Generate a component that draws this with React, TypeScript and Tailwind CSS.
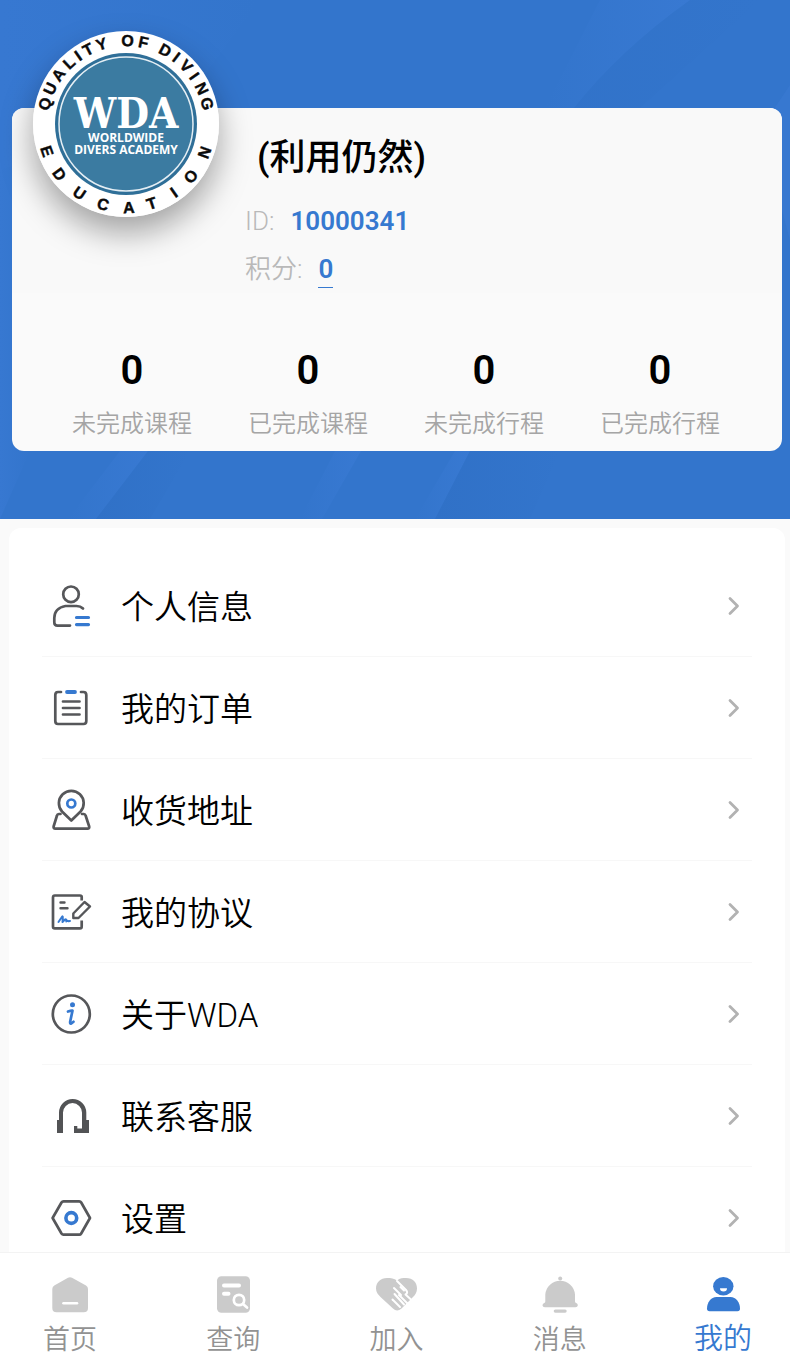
import type { ReactNode } from "react";

const GRAY = "#56575a";
const BLUE = "#3679d0";

/* --- banner --- */
function BannerBackground() {
  return (
    <svg
      className="absolute inset-0 w-full h-full"
      viewBox="0 0 790 519"
      preserveAspectRatio="none"
      aria-hidden="true"
    >
      <defs>
        <linearGradient id="streak" x1="0" y1="0" x2="1" y2="0">
          <stop offset="0" stopColor="#3879d2" stopOpacity="0" />
          <stop offset="1" stopColor="#3879d2" />
        </linearGradient>
        <linearGradient id="shade" x1="0" y1="0" x2="1" y2="0">
          <stop offset="0" stopColor="#3071c7" />
          <stop offset="1" stopColor="#3071c7" stopOpacity="0" />
        </linearGradient>
        <linearGradient id="corner" x1="0" y1="0" x2="1" y2="0">
          <stop offset="0" stopColor="#3778d1" />
          <stop offset="1" stopColor="#3778d1" stopOpacity="0" />
        </linearGradient>
      </defs>
      <rect width="790" height="519" fill="#3375cc" />
      <path d="M0 0H260L180 108L0 170Z" fill="url(#corner)" />
      <path d="M600 0H690Q620 50 574 108H545Z" fill="url(#streak)" />
      <path d="M690 0H760L640 108H574Q620 50 690 0Z" fill="url(#shade)" opacity="0.5" />
      <path d="M0 110H30V451L0 519Z" fill="url(#corner)" />
      <path d="M120 451H148L96 519H68Z" fill="url(#streak)" />
      <path d="M148 451H190L150 519H96Z" fill="url(#shade)" />
      <path d="M335 451H361L322 519H300Z" fill="url(#streak)" />
      <path d="M455 451H470L435 519H415Z" fill="url(#streak)" />
      <path d="M470 451H560L530 519H435Z" fill="url(#shade)" />
      <path d="M790 85V240L760 130Z" fill="#3778d0" />
    </svg>
  );
}

// [letter, angle in degrees from the top, clockwise]
const TOP_RING: [string, number][] = [
  ["Q", -76], ["U", -65], ["A", -54], ["L", -43], ["I", -35], ["T", -27], ["Y", -17],
  ["O", 1], ["F", 12],
  ["D", 28], ["I", 37], ["V", 46], ["I", 55], ["N", 65], ["G", 76],
];

// [letter, angle in degrees from the bottom, clockwise]
const BOTTOM_RING: [string, number][] = [
  ["E", 71], ["D", 53], ["U", 34], ["C", 16], ["A", -2], ["T", -18], ["I", -35], ["O", -51], ["N", -70],
];

function Logo() {
  return (
    <svg className="block w-full h-full" viewBox="0 0 186 186" role="img" aria-label="WDA">
      <circle cx="93" cy="93" r="93" fill="#fff" />
      <circle cx="93" cy="93" r="71" fill="#2f6f98" />
      <circle cx="93" cy="93" r="67" fill="#3b7ba1" stroke="#e4eef4" strokeWidth="1.5" />
      <g
        fontFamily="'Liberation Sans', sans-serif"
        fontWeight="700"
        fontSize="16"
        textAnchor="middle"
        fill="#0a0a0a"
        stroke="#0a0a0a"
        strokeWidth="0.4"
      >
        {TOP_RING.map(([c, a], i) => (
          <text key={i} x="93" y="15" transform={`rotate(${a} 93 93)`}>{c}</text>
        ))}
        {BOTTOM_RING.map(([c, a], i) => (
          <text key={i} x="93" y="182" transform={`rotate(${a} 93 93)`}>{c}</text>
        ))}
      </g>
      <text fill="#fff" textAnchor="middle" fontWeight="700" fontFamily="'Open Sans', sans-serif" fontSize="12">
        <tspan
          x="93"
          y="97"
          fontFamily="'DejaVu Serif Condensed', 'DejaVu Serif', serif"
          fontSize="42"
        >
          WDA
        </tspan>
        <tspan x="93" y="111">WORLDWIDE</tspan>
        <tspan x="93" y="123">DIVERS ACADEMY</tspan>
      </text>
    </svg>
  );
}

/* --- menu icons --- */
function MenuIcon({ children }: { children: ReactNode }) {
  return (
    <svg
      className="w-11 h-11 shrink-0"
      viewBox="0 0 44 44"
      fill="none"
      stroke={GRAY}
      strokeWidth="2.7"
      strokeLinecap="round"
      strokeLinejoin="round"
      aria-hidden="true"
    >
      {children}
    </svg>
  );
}

const MENU: { label: string; icon: ReactNode }[] = [
  {
    label: "个人信息",
    icon: (
      <>
        <circle cx="22" cy="10.3" r="7.8" />
        <path d="M34 24.5Q31.500 22 27.500 22H16.500Q5.500 24 5.300 34V38.500Q5.300 41.600 8.500 41.600H21" />
        <path d="M27.500 33.500H39.500M27.500 40.600H39.500" stroke={BLUE} strokeWidth="3.200" />
      </>
    ),
  },
  {
    label: "我的订单",
    icon: (
      <>
        <path d="M12 6H9Q6.300 6 6.300 9V35Q6.300 38 9 38H34.500Q37.300 38 37.300 35V9Q37.300 6 34.500 6H32" />
        <path d="M14 15.500H30.500M14 22H30.500M14 28.500H30.500" />
        <path d="M18 6H26" stroke={BLUE} strokeWidth="3.800" />
      </>
    ),
  },
  {
    label: "收货地址",
    icon: (
      <>
        <path d="M22.300 32.500L13 23.500A12.400 12.400 0 1 1 31.600 23.500Z" />
        <path d="M11.500 26H9.800Q8.300 26 8 27.500L4.600 38.500Q4.300 40.600 6.300 40.600H38.500Q40.600 40.600 40.200 38.500L36.600 27.500Q36.200 26 34.800 26H33" />
        <circle cx="22.300" cy="15.500" r="4" stroke={BLUE} />
      </>
    ),
  },
  {
    label: "我的协议",
    icon: (
      <>
        <path d="M32.700 10.500V7Q32.700 5.500 31 5.500H5.800Q4 5.500 4 7.500V36.500Q4 38.400 5.800 38.400H31Q32.700 38.400 32.700 36.500V30.500" strokeLinecap="butt" />
        <path d="M11.500 12.500H15.500M11.500 18.300H18.500" strokeWidth="2.400" />
        <path d="M24.300 23.500L35.500 12L41 16.500L29.500 28H24.300Z" strokeWidth="2.400" />
        <path d="M9.500 32L12.500 27.500Q14 25 13.800 28L13.500 32L16 29.500Q17.500 28.500 17.300 31.500Q18.500 30 19.300 31.300L21 31" stroke={BLUE} strokeWidth="2" />
      </>
    ),
  },
  {
    label: "关于WDA",
    icon: (
      <>
        <circle cx="22.300" cy="22" r="18.500" />
        <circle cx="23.500" cy="12.800" r="2.500" fill={BLUE} stroke="none" />
        <path d="M19 19.500Q22 18.500 23.500 18.700L21.200 29.500Q20.800 32 22.300 31.500L24.500 29.800" stroke={BLUE} />
      </>
    ),
  },
  {
    label: "联系客服",
    icon: (
      <path
        d="M8 39V26H10V18.600A13.650 13.650 0 0 1 37.300 18.600V26H40V39H25V32H28.300V34.500H33V18.600A9.500 9.500 0 0 0 14 18.600V39Z"
        fill="#525355"
        stroke="none"
      />
    ),
  },
  {
    label: "设置",
    icon: (
      <>
        <path d="M3.600 22L12.500 6.500Q13.300 5.300 14.500 5.300H30.200Q31.500 5.300 32.200 6.500L41 22L32.200 37.500Q31.500 38.700 30.200 38.700H14.500Q13.300 38.700 12.500 37.500Z" />
        <circle cx="22.300" cy="22" r="5.400" stroke={BLUE} strokeWidth="3.600" />
      </>
    ),
  },
];

function Chevron() {
  return (
    <svg className="w-3 h-5 ml-auto" viewBox="0 0 12 20" fill="none" aria-hidden="true">
      <path d="M2 2.500L9.500 10L2 17.500" stroke="#b2b2b2" strokeWidth="2.800" strokeLinecap="round" strokeLinejoin="round" />
    </svg>
  );
}

/* --- tab bar --- */
const TABS: { label: string; active?: boolean; icon: ReactNode }[] = [
  {
    label: "首页",
    icon: (
      <>
        <path d="M18 3.800Q20 2.700 22 3.800L36 11.500Q38 12.800 38 15V34Q38 38.300 33.700 38.300H6.600Q2.300 38.300 2.300 34V15Q2.300 12.800 4.300 11.500Z" />
        <path d="M13.500 29.300H27" stroke="#fff" strokeWidth="2.600" strokeLinecap="round" />
      </>
    ),
  },
  {
    label: "查询",
    icon: (
      <>
        <rect x="4" y="2.300" width="33" height="36.400" rx="4.500" />
        <g stroke="#fff" strokeLinecap="round" fill="none">
          <path d="M11 11.500H26M11 19.700H15.500" strokeWidth="4" />
          <circle cx="26" cy="26" r="5.200" strokeWidth="2.700" />
          <path d="M30 30L34 33.500" strokeWidth="2.700" />
        </g>
      </>
    ),
  },
  {
    label: "加入",
    icon: (
      <>
        <path d="M20 6.500C23 4 26 4 29 4C36 4 40 8.500 40 14.500C40 18.500 38 21 36 23L24.500 34.500Q20 38.500 16 34.500L3.500 23C1 20.500 -1 18 -1 14.500C-1 8.500 3.500 4 10 4C14 4 17 4.500 20 6.500Z" />
        <g stroke="#fff" strokeWidth="2" fill="none" strokeLinecap="round" strokeLinejoin="round">
          <path d="M20 7L29 16Q31.500 19 28.500 20.500L34.500 26" />
          <path d="M17 14L24 21" />
          <path d="M23.500 13L27 16.500" />
          <path d="M22 21L30.500 29.500" />
          <path d="M15.500 25.500L23 33" />
          <path d="M17.500 20L27 30.500" />
        </g>
      </>
    ),
  },
  {
    label: "消息",
    icon: (
      <>
        <circle cx="20.200" cy="4.500" r="2" />
        <path d="M5.300 20.500A14.900 14.900 0 0 1 35 20.500V27.500Q35 28.500 36.200 29Q38 29.800 37.800 31.500Q37.500 33.200 35.500 33.200H4.800Q2.800 33.200 2.500 31.500Q2.400 29.800 4.200 29Q5.300 28.500 5.300 27.500Z" />
        <rect x="13.700" y="35.500" width="13" height="3.200" rx="1.600" />
      </>
    ),
  },
  {
    label: "我的",
    active: true,
    icon: (
      <>
        <ellipse cx="20.300" cy="12.200" rx="10.200" ry="9.200" />
        <path d="M17 14.200H24Q24 17.500 20.500 17.500Q17 17.500 17 14.200Z" fill="#fff" />
        <path d="M13.500 23H27.500C33 23 37 28.500 37 34.500Q37 37.300 34.500 37.300H6.500Q4 37.300 4 34.500C4 28.500 8 23 13.500 23Z" />
      </>
    ),
  },
];

const STATS = [
  { label: "未完成课程", value: 0 },
  { label: "已完成课程", value: 0 },
  { label: "未完成行程", value: 0 },
  { label: "已完成行程", value: 0 },
];

export default function App() {
  return (
    <div className="h-screen flex flex-col bg-[#fafafa] text-black font-['Roboto','Noto_Sans_CJK_SC',sans-serif]">
      <main className="flex-1 min-h-0 overflow-y-auto [scrollbar-width:none]">
        <header className="relative pl-3 pr-2 pt-[108px] pb-[68px]">
          <BannerBackground />
          <section className="relative rounded-xl bg-[#fafafa]">
            <div className="absolute -top-[77px] left-[21px] w-[186px] h-[186px] rounded-full shadow-[0_16px_32px_rgba(0,0,0,0.35)]">
              <Logo />
            </div>

            <div className="rounded-t-xl bg-[#f9f9f9] pl-[233px] pt-[26px]">
              <h1 className="pl-3 text-[36px] leading-[48px] font-medium">(利用仍然)</h1>
              <dl className="pt-[15px] text-[26px] leading-[48px] text-[#b9b9b9] font-[350]">
                <div className="flex gap-4">
                  <dt>ID:</dt>
                  <dd className="text-[#3679d0] font-semibold">10000341</dd>
                </div>
                <div className="flex gap-4">
                  <dt>积分:</dt>
                  <dd>
                    <a href="#points" className="block h-[43px] border-b border-current text-[#3679d0] font-semibold">
                      0
                    </a>
                  </dd>
                </div>
              </dl>
            </div>

            <dl className="grid grid-cols-4 pl-8 pr-[34px] pt-[52px] pb-2 text-center">
              {STATS.map((s) => (
                <div key={s.label} className="flex flex-col-reverse">
                  <dt className="text-[24px] leading-[38px] text-[#a5a5a5] font-[350]">{s.label}</dt>
                  <dd className="pb-2 text-[40px] leading-[52px] font-semibold">{s.value}</dd>
                </div>
              ))}
            </dl>
          </section>
        </header>

        <nav className="mt-[9px] ml-[9px] mr-[5px] px-[33px] pt-[27px] rounded-xl bg-white" aria-label="菜单">
          <ul>
            {MENU.map((item) => (
              <li key={item.label} className="border-b border-[#f7f7f7] last:border-b-0">
                <a href="#" className="flex items-center h-[101px] pl-[7px] pr-3">
                  <MenuIcon>{item.icon}</MenuIcon>
                  <span className="ml-7 pt-1 text-[33px] font-[350]">{item.label}</span>
                  <Chevron />
                </a>
              </li>
            ))}
          </ul>
        </nav>
      </main>

      <nav className="border-t border-[#f3f3f3] bg-white h-[106px] pl-10 pr-[37px] pt-[21px] flex justify-between" aria-label="标签栏">
        {TABS.map((tab) => (
          <button
            key={tab.label}
            className={
              tab.active
                ? "w-[60px] flex flex-col items-center gap-1 text-[29px] leading-[42px] font-[350] whitespace-nowrap text-[#3679d0]"
                : "w-[60px] flex flex-col items-center gap-1 text-[27px] leading-[44px] font-[350] whitespace-nowrap text-[#929292]"
            }
          >
            <svg
              className="w-10 h-10 shrink-0 overflow-visible"
              viewBox="0 0 40 40"
              fill={tab.active ? BLUE : "#cbcbcb"}
              aria-hidden="true"
            >
              {tab.icon}
            </svg>
            {tab.label}
          </button>
        ))}
      </nav>
    </div>
  );
}
